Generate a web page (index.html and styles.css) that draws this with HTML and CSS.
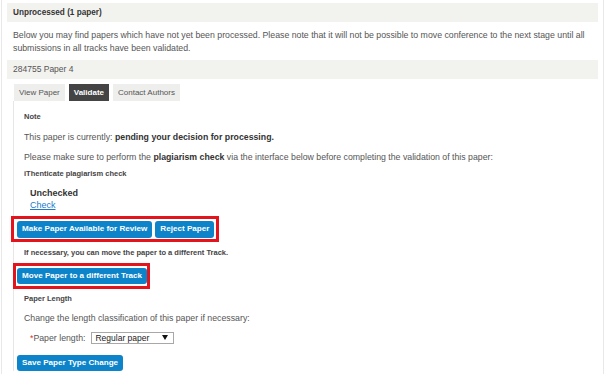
FILE: index.html
```html
<!DOCTYPE html>
<html>
<head>
<meta charset="utf-8">
<link rel="stylesheet" href="styles.css">
</head>
<body>
<div class="wrap">
  <div class="section-head">Unprocessed (1 paper)</div>
  <p class="intro">Below you may find papers which have not yet been processed. Please note that it will not be possible to move conference to the next stage until all submissions in all tracks have been validated.</p>
  <div class="paper-bar">284755 Paper 4</div>
  <div class="tabs">
    <span class="tab">View Paper</span>
    <span class="tab active">Validate</span>
    <span class="tab">Contact Authors</span>
  </div>
  <div class="panel">
    <div class="label note">Note</div>
    <p class="line status">This paper is currently: <b>pending your decision for processing.</b></p>
    <p class="line please">Please make sure to perform the <b>plagiarism check</b> via the interface below before completing the validation of this paper:</p>
    <div class="label ithent">iThenticate plagiarism check</div>
    <div class="check-block">
      <div class="unchecked">Unchecked</div>
      <a class="check-link" href="#">Check</a>
    </div>
    <div class="hl hl-one">
      <button class="btn">Make Paper Available for Review</button>
      <button class="btn">Reject Paper</button>
    </div>
    <div class="label necessary">If necessary, you can move the paper to a different Track.</div>
    <div class="hl hl-two">
      <button class="btn">Move Paper to a different Track</button>
    </div>
    <div class="label length">Paper Length</div>
    <p class="line change">Change the length classification of this paper if necessary:</p>
    <div class="field">
      <span class="req">*</span><span class="field-label">Paper length:</span>
      <span class="select">Regular paper<svg class="arrow" width="6" height="5" viewBox="0 0 6 5"><path d="M0 0 L6 0 L3 5 Z" fill="#111"/></svg></span>
    </div>
    <button class="btn save">Save Paper Type Change</button>
  </div>
</div>
</body>
</html>
```

FILE: styles.css
```css
* { box-sizing: border-box; }
html, body { margin: 0; padding: 0; background: #fff; }
body {
  font-family: "Liberation Sans", Arial, sans-serif;
  font-size: 8.75px;
  color: #555;
}
.wrap {
  margin-left: 1px;
  width: 603px;
  min-height: 374px;
  border-left: 1px solid #e8e8e8;
  border-right: 1px solid #e8e8e8;
  padding: 3px 5px 0 5px;
}
.section-head {
  height: 19px;
  line-height: 19px;
  background: #f2f2ef;
  padding-left: 6px;
  font-size: 8.2px;
  font-weight: bold;
  color: #333;
}
.intro {
  margin: 7px 0 6px 0;
  padding-left: 6px;
  line-height: 12.6px;
}
.paper-bar {
  height: 19px;
  line-height: 19px;
  background: #f2f2ef;
  padding-left: 6px;
  font-size: 8.5px;
  color: #555;
}
.tabs {
  display: flex;
  gap: 4px;
  margin: 5px 0 0 7px;
}
.tab {
  height: 17px;
  line-height: 17px;
  padding: 0 5px;
  background: #eeeeec;
  color: #555;
  font-size: 8px;
}
.tab.active {
  background: #444;
  color: #fff;
  font-weight: bold;
}
.panel {
  margin-left: 6px;
  border-left: 1px solid #e6e6e6;
  padding: 11px 0 0 0;
  display: flex;
  flex-direction: column;
  align-items: flex-start;
}
.label {
  font-size: 7.5px;
  font-weight: bold;
  color: #444;
  line-height: 10px;
  margin-left: 10px;
}
.line {
  margin: 0 0 0 10px;
  line-height: 12px;
}
.line b { color: #333; }
.status { margin-top: 8.7px; }
.please { margin-top: 8.3px; }
.ithent { margin-top: 5.7px; }
.check-block {
  margin: 8.3px 0 0 16px;
  line-height: 12px;
  display: flex;
  flex-direction: column;
  align-items: flex-start;
}
.unchecked { font-weight: bold; color: #333; font-size: 9px; }
.check-link { color: #1a7cc9; font-size: 9px; }
.hl {
  border: 3px solid #e3141c;
  display: flex;
  gap: 3px;
}
.hl-one { margin: 4.7px 0 0 -3px; padding: 2.5px 2px 1.5px 3px; }
.necessary { margin-top: 5.7px; }
.hl-two { margin: 4.7px 0 0 -1px; padding: 2px 0 2px 1px; }
.btn {
  font-family: "Liberation Sans", Arial, sans-serif;
  font-size: 8.1px;
  font-weight: bold;
  color: #fff;
  background: #0d83c9;
  border: none;
  border-radius: 3px;
  height: 16.5px;
  padding: 0 5px;
  line-height: 16.5px;
  margin: 0;
}
.length { margin-top: 5px; }
.change { margin-top: 7.7px; }
.field {
  margin: 8px 0 0 16px;
  display: flex;
  align-items: center;
  height: 12px;
}
.req { color: #d9302c; }
.field-label { margin-right: 6px; }
.select {
  width: 83px;
  height: 12px;
  border: 1px solid #a8a8a8;
  background: #fff;
  color: #222;
  font-size: 8.5px;
  display: flex;
  align-items: center;
  justify-content: space-between;
  padding: 0 5px 0 3px;
  line-height: 10px;
}
.arrow { display: block; }
.save { margin: 10.8px 0 0 3px; }
```
